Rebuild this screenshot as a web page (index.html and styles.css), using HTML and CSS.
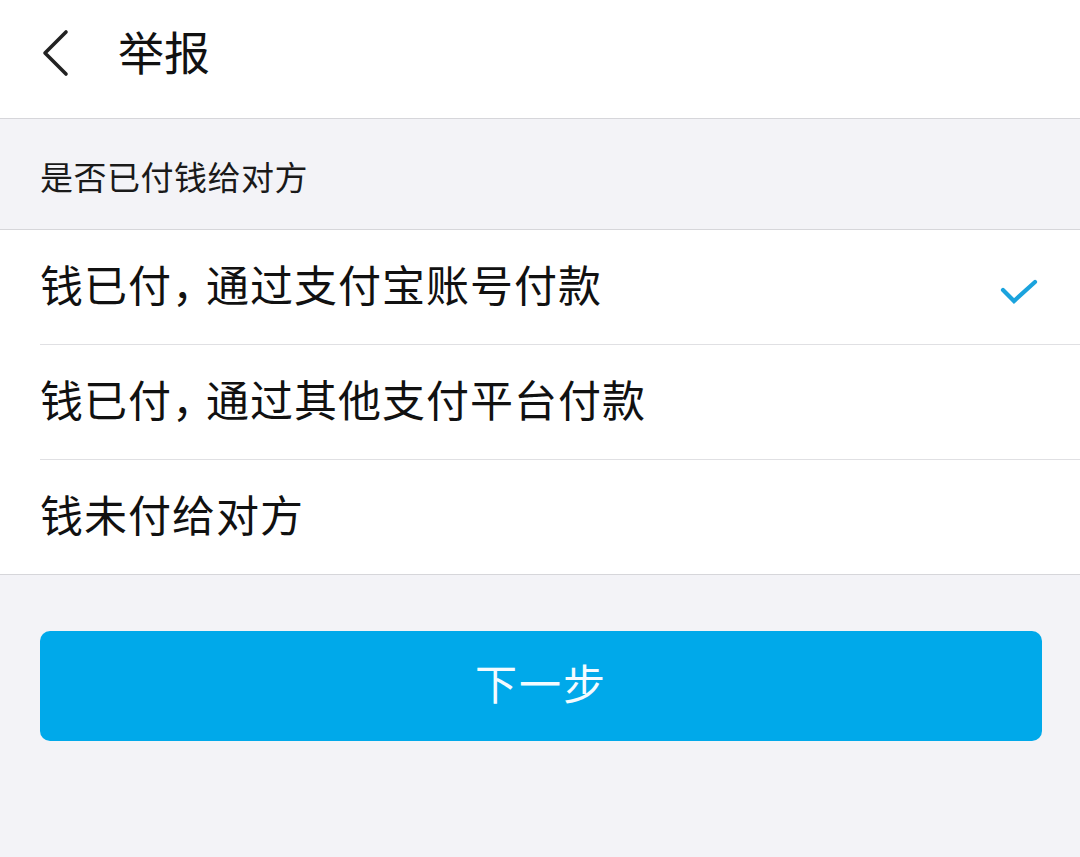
FILE: index.html
```html
<!DOCTYPE html>
<html lang="zh-CN">
<head>
<meta charset="utf-8">
<link rel="stylesheet" href="styles.css">
</head>
<body>
<div class="page">
  <header class="topbar">
    <span class="back">
      <svg width="30" height="48" viewBox="0 0 30 48"><path d="M26 3 L5 24 L26 45" fill="none" stroke="#222" stroke-width="3.6" stroke-linecap="round" stroke-linejoin="round"/></svg>
    </span>
    <h1 class="title">举报</h1>
  </header>
  <div class="section-label">是否已付钱给对方</div>
  <ul class="options">
    <li class="option"><span>钱已付<span class="comma">，</span>通过支付宝账号付款</span>
      <svg class="check" width="38" height="30" viewBox="0 0 38 30"><path d="M3 12 L14 23 L35 4" fill="none" stroke="#1ba3dd" stroke-width="4.2" stroke-linecap="round"/></svg>
    </li>
    <li class="option"><span>钱已付<span class="comma">，</span>通过其他支付平台付款</span></li>
    <li class="option"><span>钱未付给对方</span></li>
  </ul>
  <div class="actions">
    <button class="next">下一步</button>
  </div>
</div>
</body>
</html>
```
FILE: styles.css
```css
* { box-sizing: border-box; }
html, body { margin: 0; padding: 0; }
body {
  width: 1080px;
  height: 857px;
  background: #f3f3f7;
  font-family: "Noto Sans CJK SC", "Noto Sans", sans-serif;
  color: #111;
  overflow: hidden;
}
.topbar {
  height: 119px;
  background: #fff;
  border-bottom: 1px solid #d6d6da;
  display: flex;
  align-items: center;
  padding-left: 40px;
}
.back { display: flex; width: 78px; margin-top: -12px; }
.title {
  margin: 0;
  font-size: 46px;
  font-weight: 400;
  line-height: 1;
  margin-top: -18px;
  color: #111;
}
.section-label {
  height: 111px;
  display: flex;
  align-items: center;
  padding-left: 40px;
  padding-top: 4px;
  font-size: 33px;
  letter-spacing: 0.5px;
  color: #1a1a1a;
  border-bottom: 1px solid #d6d6da;
}
.options {
  list-style: none;
  margin: 0;
  padding: 0 0 0 40px;
  background: #fff;
  border-bottom: 1px solid #d6d6da;
}
.option {
  height: 115px;
  display: flex;
  align-items: center;
  justify-content: space-between;
  padding-right: 42px;
  font-size: 43px;
  border-bottom: 1px solid #e0e0e3;
}
.option > span { margin-top: -8px; letter-spacing: 1px; }
.comma { letter-spacing: -9px; margin-right: 0; }
.option:last-child { border-bottom: none; height: 114px; }
.check { margin-right: 0; margin-top: 12px; }
.actions { padding: 56px 38px 0 40px; }
.next {
  display: block;
  width: 100%;
  height: 110px;
  border: none;
  border-radius: 10px;
  background: #00a9ea;
  color: #f4fbff;
  font-family: "Noto Sans CJK SC", sans-serif;
  font-size: 42px;
  letter-spacing: 2px;
  padding: 0 0 10px 0;
}
```
